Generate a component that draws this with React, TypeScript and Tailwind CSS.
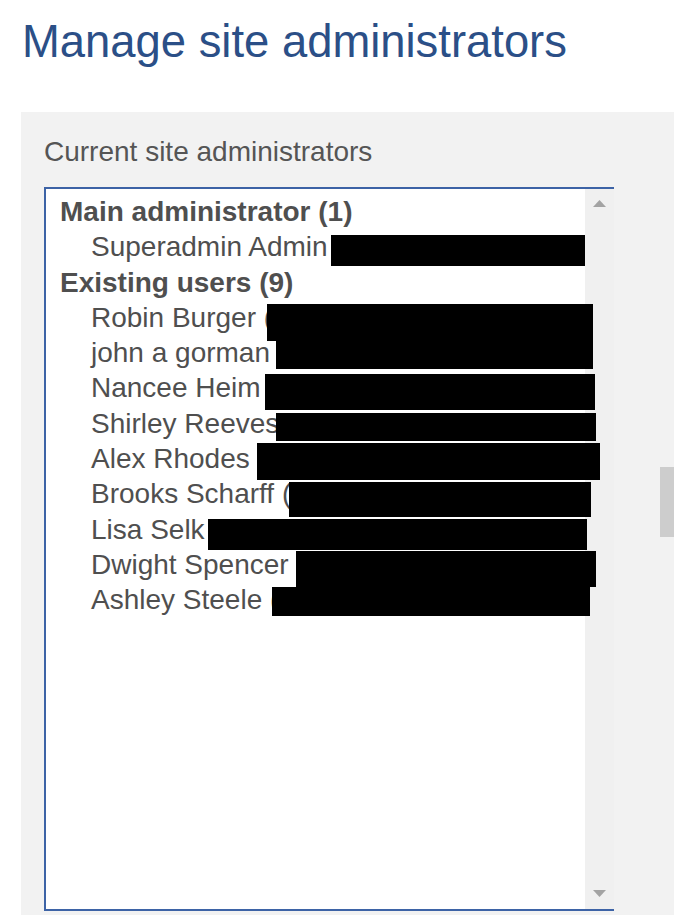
const groups = [
  { label: 'Main administrator (1)', users: ['Superadmin Admin'] },
  {
    label: 'Existing users (9)',
    users: [
      'Robin Burger (',
      'john a gorman',
      'Nancee Heim',
      'Shirley Reeves',
      'Alex Rhodes',
      'Brooks Scharff (',
      'Lisa Selk',
      'Dwight Spencer',
      'Ashley Steele (',
    ],
  },
]

// redacted e-mail addresses, page coordinates [left, top, width, height]
const redactions: [number, number, number, number][] = [
  [331, 235, 254, 31],
  [267, 304, 326, 37],
  [276, 339, 317, 30],
  [265, 374, 330, 36],
  [276, 413, 320, 28],
  [257, 443, 343, 37],
  [289, 482, 302, 35],
  [208, 519, 379, 31],
  [296, 551, 300, 36],
  [272, 587, 318, 29],
]

export default function App() {
  return (
    <div
      className="relative w-[674px] h-[915px] overflow-hidden bg-white"
      style={{ fontFamily: '"Liberation Sans", Arial, sans-serif' }}
    >
      <h1 className="pt-[16px] pl-[22px] text-[45.4px] leading-[52px] text-[#2b4f87] font-normal">
        Manage site administrators
      </h1>

      <div className="mt-[44px] ml-[21px] bg-[#f2f2f2] pt-[24px] pl-[23px] pb-[20px]">
        <div className="text-[28px] leading-[32px] text-[#555555]">
          Current site administrators
        </div>

        {/* listbox */}
        <div className="mt-[19px] w-[570px] h-[724px] flex bg-white border-l-2 border-t-2 border-b-2 border-[#3d63a6]">
          <div className="flex-1 pt-[5px] text-[28px] text-[#4f4f4f]">
            {groups.map((g) => (
              <div key={g.label}>
                <div className="h-[35.3px] leading-[35.3px] pl-[14px] font-bold whitespace-nowrap">
                  {g.label}
                </div>
                {g.users.map((u) => (
                  <div key={u} className="h-[35.3px] leading-[35.3px] pl-[45px] whitespace-nowrap">
                    {u}
                  </div>
                ))}
              </div>
            ))}
          </div>

          {/* list scrollbar */}
          <div className="w-[29px] bg-[#f0f0f0] flex flex-col items-center justify-between pt-[11px] pb-[12px]">
            <svg width="13" height="7" viewBox="0 0 13 7">
              <path d="M6.5 0 L13 7 L0 7 Z" fill="#a3a3a3" />
            </svg>
            <svg width="13" height="7" viewBox="0 0 13 7">
              <path d="M0 0 L13 0 L6.5 7 Z" fill="#a3a3a3" />
            </svg>
          </div>
        </div>
      </div>

      {redactions.map(([x, y, w, h], i) => (
        <div
          key={i}
          className="absolute bg-black"
          style={{ left: x, top: y, width: w, height: h }}
        />
      ))}

      {/* page scrollbar thumb */}
      <div className="absolute left-[660px] top-[467px] w-[14px] h-[70px] bg-[#cdcdcd]" />
    </div>
  )
}
